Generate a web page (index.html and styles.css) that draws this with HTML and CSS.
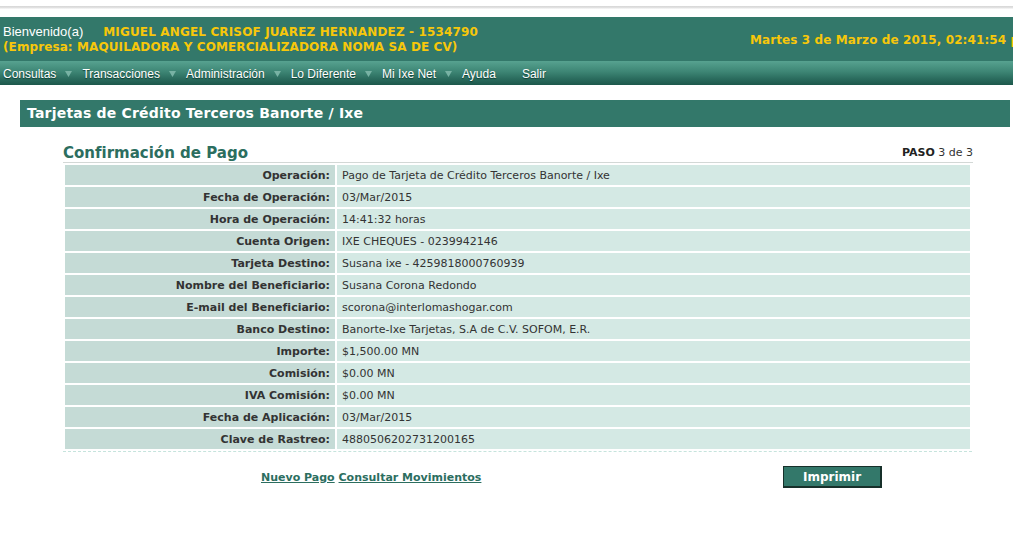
FILE: index.html
```html
<!DOCTYPE html>
<html lang="es">
<head>
<meta charset="utf-8">
<title>Tarjetas de Crédito Terceros Banorte / Ixe</title>
<link rel="stylesheet" href="styles.css">
</head>
<body>
<div class="topstrip"></div>
<header class="hdr">
  <div class="hdr-left">
    <div class="hdr-line"><span class="welcome">Bienvenido(a)</span><span class="yellow name">MIGUEL ANGEL CRISOF JUAREZ HERNANDEZ - 1534790</span></div>
    <div class="hdr-line yellow">(Empresa: MAQUILADORA Y COMERCIALIZADORA NOMA SA DE CV)</div>
  </div>
  <div class="hdr-date yellow">Martes 3 de Marzo de 2015, 02:41:54 pm</div>
</header>
<nav class="menu">
  <a class="mi">Consultas<svg class="arr" width="7" height="6" viewBox="0 0 7 6"><polygon points="0,0 7,0 3.5,6"/></svg></a>
  <a class="mi">Transacciones<svg class="arr" width="7" height="6" viewBox="0 0 7 6"><polygon points="0,0 7,0 3.5,6"/></svg></a>
  <a class="mi">Administración<svg class="arr" width="7" height="6" viewBox="0 0 7 6"><polygon points="0,0 7,0 3.5,6"/></svg></a>
  <a class="mi">Lo Diferente<svg class="arr" width="7" height="6" viewBox="0 0 7 6"><polygon points="0,0 7,0 3.5,6"/></svg></a>
  <a class="mi">Mi Ixe Net<svg class="arr" width="7" height="6" viewBox="0 0 7 6"><polygon points="0,0 7,0 3.5,6"/></svg></a>
  <a class="mi noarr">Ayuda</a>
  <a class="mi noarr">Salir</a>
</nav>
<main class="content">
  <h1 class="titlebar">Tarjetas de Crédito Terceros Banorte / Ixe</h1>
  <section class="panel">
    <div class="panel-head">
      <h2 class="panel-title">Confirmación de Pago</h2>
      <div class="paso"><b>PASO</b> 3 de 3</div>
    </div>
    <table class="data">
      <tr><th>Operación:</th><td>Pago de Tarjeta de Crédito Terceros Banorte / Ixe</td></tr>
      <tr><th>Fecha de Operación:</th><td>03/Mar/2015</td></tr>
      <tr><th>Hora de Operación:</th><td>14:41:32 horas</td></tr>
      <tr><th>Cuenta Origen:</th><td>IXE CHEQUES - 0239942146</td></tr>
      <tr><th>Tarjeta Destino:</th><td>Susana ixe - 4259818000760939</td></tr>
      <tr><th>Nombre del Beneficiario:</th><td>Susana Corona Redondo</td></tr>
      <tr><th>E-mail del Beneficiario:</th><td>scorona@interlomashogar.com</td></tr>
      <tr><th>Banco Destino:</th><td>Banorte-Ixe Tarjetas, S.A de C.V. SOFOM, E.R.</td></tr>
      <tr><th>Importe:</th><td>$1,500.00 MN</td></tr>
      <tr><th>Comisión:</th><td>$0.00 MN</td></tr>
      <tr><th>IVA Comisión:</th><td>$0.00 MN</td></tr>
      <tr><th>Fecha de Aplicación:</th><td>03/Mar/2015</td></tr>
      <tr><th>Clave de Rastreo:</th><td>4880506202731200165</td></tr>
    </table>
    <div class="actions">
      <div class="links"><a href="#">Nuevo Pago</a> <a href="#">Consultar Movimientos</a></div>
      <button class="btn" type="button">Imprimir</button>
    </div>
  </section>
</main>
</body>
</html>
```
FILE: styles.css
```css
* { box-sizing: border-box; }
html, body { margin: 0; padding: 0; background: #fff; }
body { font-family: "DejaVu Sans", Verdana, sans-serif; font-size: 11px; color: #333; width: 1013px; overflow: hidden; }

.topstrip {
  height: 17px;
  background: linear-gradient(to bottom, #fff 0, #fff 6px, #d6d6d6 6px, #e4e4e4 8px, #fff 9px, #fff 100%);
}

.hdr {
  height: 44px;
  background: #33786a;
  display: flex;
  align-items: center;
  overflow: hidden;
  white-space: nowrap;
}
.hdr-left { flex: 0 0 750px; padding-left: 3px; padding-top: 1px; }
.hdr-line { line-height: 15px; font-size: 12px; }
.welcome { font-family: "Liberation Sans", Arial, sans-serif; font-size: 13px; color: #fff; margin-right: 20px; }
.yellow { color: #f7c70a; font-weight: bold; font-family: "DejaVu Sans", Verdana, sans-serif; font-size: 12px; letter-spacing: 0.1px; }
.name { letter-spacing: 0.15px; }
.hdr-date { flex: 0 0 auto; padding-top: 1px; }

.menu {
  height: 24px;
  background: linear-gradient(to bottom, #57a290 0%, #3d8574 45%, #2a6b5d 75%, #1d584b 100%);
  display: flex;
  align-items: center;
  padding-left: 3px;
  font-family: "Liberation Sans", Arial, sans-serif;
  font-size: 12px;
  white-space: nowrap;
}
.mi {
  color: #fff;
  text-shadow: 0 1px 1px rgba(0, 40, 30, 0.7);
  display: flex;
  align-items: center;
  gap: 9px;
  margin-right: 10px;
  padding-top: 1px;
}
.mi.noarr { margin-right: 26px; }
.arr { fill: #78b2a4; }

.content { padding: 15px 3px 0 20px; }
.titlebar {
  margin: 0;
  height: 27px;
  background: #33786a;
  color: #fff;
  font-size: 14px;
  font-weight: bold;
  line-height: 27px;
  padding-left: 7px;
  letter-spacing: 0.2px;
}

.panel { margin-left: 43px; width: 910px; }
.panel-head {
  display: flex;
  justify-content: space-between;
  align-items: flex-end;
  height: 36px;
  border-bottom: 1px solid #d3d8d6;
}
.panel-title { margin: 0; font-size: 15px; font-weight: bold; color: #2c6e5f; line-height: 18px; }
.paso { font-size: 11px; color: #333; line-height: 14px; padding-bottom: 2px; }
.paso b { color: #222; }

.data {
  width: 909px;
  border-collapse: separate;
  border-spacing: 2px;
  border-bottom: 1px dashed #c6e4dd;
}
.data th, .data td { height: 20px; padding: 0 5px; font-size: 11px; white-space: nowrap; }
.data th { width: 270px; background: #c5dbd6; text-align: right; font-weight: bold; color: #333; }
.data td { background: #d4e9e4; text-align: left; font-weight: normal; color: #333; }

.actions { display: flex; align-items: center; margin-top: 14px; }
.links { margin-left: 198px; width: 522px; font-weight: bold; font-size: 11px; padding-top: 1px; }
.links a { color: #2c6e5f; text-decoration: underline; }
.btn {
  width: 99px;
  height: 22px;
  background: #33786a;
  color: #fff;
  font-family: "DejaVu Sans", Verdana, sans-serif;
  font-weight: bold;
  font-size: 12px;
  border: 1px solid #17302a;
  border-bottom-width: 2px;
  border-right-width: 2px;
  padding: 0;
}
```
